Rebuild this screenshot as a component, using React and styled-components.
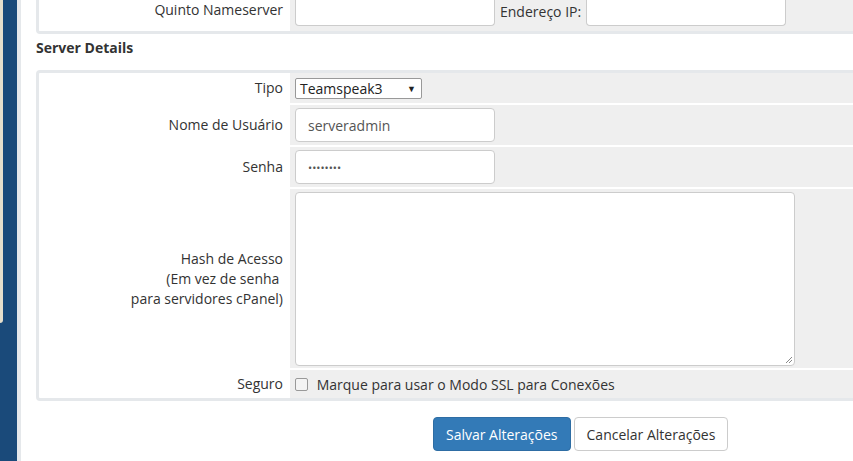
import React from "react";
import styled, { createGlobalStyle } from "styled-components";

const G = createGlobalStyle`
  html,body{margin:0;padding:0;overflow:hidden;background:#fff;}
  body{font-family:"Open Sans",sans-serif;font-size:14px;color:#333;}
`;
const Page = styled.div`display:flex;height:461px;width:853px;overflow:hidden;`;
const Side = styled.div`width:17px;background:#1a4a7a;position:relative;flex:none;`;
const Beige = styled.div`position:absolute;left:0;top:0;width:3px;height:323px;background:#e6dfcc;border-bottom-right-radius:3px;`;
const Gutter = styled.div`width:4px;background:#e5e8eb;flex:none;`;
const Main = styled.div`flex:1;min-width:0;overflow:hidden;padding:0 0 0 15px;`;
const Panel = styled.div`
  border:3px solid #e5e8eb;border-radius:4px;width:880px;box-sizing:border-box;
  margin-top:${p=>p.mt||0}px;
`;
const Row = styled.div`display:flex;min-height:${p=>p.h}px;& + &{border-top:2px solid #fff;}`;
const Label = styled.div`
  width:244px;flex:none;padding-right:7px;text-align:right;font-size:14px;
  display:flex;align-items:center;justify-content:flex-end;line-height:20px;
`;
const Field = styled.div`flex:1;background:#efefef;display:flex;align-items:center;padding-left:5px;gap:5px;`;
const Input = styled.div`
  width:${p=>p.w}px;height:${p=>p.h}px;box-sizing:border-box;background:#fff;border:1px solid #ccc;border-radius:4px;
  padding:0 12px;display:flex;align-items:center;font-size:14px;color:#555;
`;
const Select = styled.div`
  width:127px;height:21px;box-sizing:border-box;border:1px solid #999;background:#fff;border-radius:2px;
  display:flex;align-items:center;justify-content:space-between;padding:0 5px 0 4px;font-size:14px;color:#222;
`;
const Textarea = styled.div`
  width:500px;height:174px;box-sizing:border-box;background:#fff;border:1px solid #ccc;border-radius:4px;position:relative;
`;
const Grip = styled.svg`position:absolute;right:1px;bottom:1px;`;
const Title = styled.div`font-weight:700;font-size:14px;margin-top:2px;height:24px;line-height:24px;`;
const Check = styled.span`width:11px;height:11px;border:1px solid #999;border-radius:2px;background:#f4f4f4;display:inline-block;margin-right:5px;`;
const Buttons = styled.div`display:flex;gap:3px;margin:16px 0 0 397px;`;
const Btn = styled.div`
  height:34px;box-sizing:border-box;padding:0 12px;border-radius:4px;display:flex;align-items:center;font-size:14px;
  background:${p=>p.primary?"#337ab7":"#fff"};color:${p=>p.primary?"#fff":"#333"};
  border:1px solid ${p=>p.primary?"#2e6da4":"#ccc"};
`;
const Cut = { borderTop: "none", borderTopLeftRadius: 0, borderTopRightRadius: 0 };

export default function App(){
  return <Page><G/>
    <Side><Beige/></Side><Gutter/>
    <Main>
      <Panel style={Cut}>
        <Row h={31}><Label style={{alignItems:"flex-start"}}>Quinto Nameserver</Label>
          <Field style={{alignItems:"flex-start"}}><Input w={200} h={26} style={Cut}/>
          <span style={{lineHeight:"24px"}}>Endereço IP:</span><Input w={200} h={26} style={Cut}/></Field></Row>
      </Panel>
      <Title>Server Details</Title>
      <Panel mt={10}>
        <Row h={30}><Label>Tipo</Label><Field><Select>Teamspeak3<span style={{fontSize:9}}>▼</span></Select></Field></Row>
        <Row h={40}><Label>Nome de Usuário</Label><Field><Input w={200} h={34}>serveradmin</Input></Field></Row>
        <Row h={40}><Label>Senha</Label><Field><Input w={200} h={34} style={{fontSize:11}}>••••••••</Input></Field></Row>
        <Row h={179}><Label><span>Hash de Acesso<br/>(Em vez de senha&nbsp;<br/>para servidores cPanel)</span></Label>
          <Field><Textarea><Grip width="9" height="9" viewBox="0 0 9 9"><path d="M8 2L2 8M8 5L5 8" stroke="#888" strokeWidth="1"/></Grip></Textarea></Field></Row>
        <Row h={28}><Label>Seguro</Label><Field style={{gap:0}}><Check/>&nbsp;Marque para usar o Modo SSL para Conexões</Field></Row>
      </Panel>
      <Buttons><Btn primary>Salvar Alterações</Btn><Btn>Cancelar Alterações</Btn></Buttons>
    </Main>
  </Page>;
}
